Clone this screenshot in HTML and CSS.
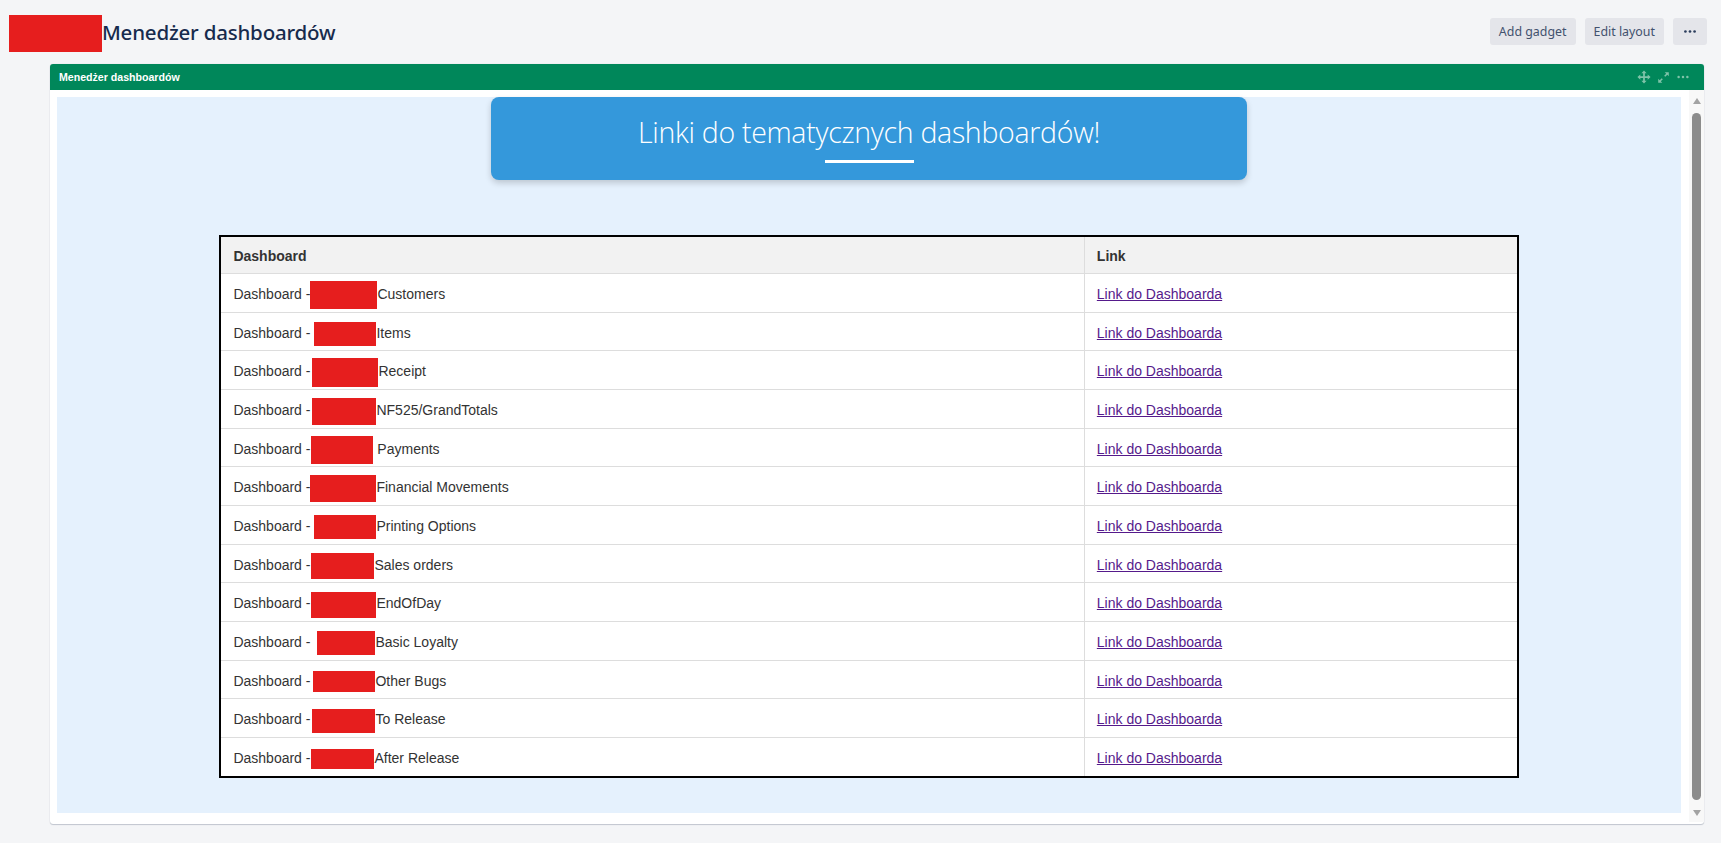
FILE: index.html
```html
<!DOCTYPE html>
<html lang="pl">
<head>
<meta charset="utf-8">
<title>Menedżer dashboardów</title>
<link rel="stylesheet" href="styles.css">
</head>
<body>
<header class="page-header">
  <div class="title-wrap">
    <span class="logo-redact"></span>
    <h1 class="page-title">Menedżer dashboardów</h1>
  </div>
  <div class="actions">
    <button class="btn">Add gadget</button>
    <button class="btn">Edit layout</button>
    <button class="btn btn-more"><svg viewBox="0 0 16 6" width="14" height="5"><circle cx="2.5" cy="3" r="1.6" fill="currentColor"/><circle cx="8" cy="3" r="1.6" fill="currentColor"/><circle cx="13.5" cy="3" r="1.6" fill="currentColor"/></svg></button>
  </div>
</header>

<section class="gadget">
  <div class="gadget-head">
    <span class="gadget-title">Menedżer dashboardów</span>
    <div class="gadget-tools">
      <svg class="tool" viewBox="0 0 16 16" width="14" height="14"><path d="M8 0.5 L11 3.8 H9 V7 H12.2 V5 L15.5 8 L12.2 11 V9 H9 V12.2 H11 L8 15.5 L5 12.2 H7 V9 H3.8 V11 L0.5 8 L3.8 5 V7 H7 V3.8 H5 Z" fill="currentColor"/></svg>
      <svg class="tool" viewBox="0 0 16 16" width="13" height="13"><path d="M9.5 1.5 H14.5 V6.5 L12.7 4.7 L10.2 7.2 L8.8 5.8 L11.3 3.3 Z M6.5 14.5 H1.5 V9.5 L3.3 11.3 L5.8 8.8 L7.2 10.2 L4.7 12.7 Z" fill="currentColor"/></svg>
      <svg class="tool" viewBox="0 0 16 16" width="14" height="14"><circle cx="3" cy="8" r="1.4" fill="currentColor"/><circle cx="8" cy="8" r="1.4" fill="currentColor"/><circle cx="13" cy="8" r="1.4" fill="currentColor"/></svg>
    </div>
  </div>
  <div class="gadget-body">
    <div class="frame">
      <div class="canvas">
        <div class="banner">
          <h2 class="banner-title">Linki do tematycznych dashboardów!</h2>
          <span class="banner-rule"></span>
        </div>
        <table class="dash-table">
          <thead>
            <tr><th class="col-name">Dashboard</th><th class="col-link">Link</th></tr>
          </thead>
          <tbody>
            <tr><td>Dashboard -<span class="redact" style="margin-left:0px;width:67px;height:28px;margin-top:-6px;margin-bottom:-6px"></span>Customers</td><td><a href="#">Link do Dashboarda</a></td></tr>
            <tr><td>Dashboard -<span class="redact" style="margin-left:4px;width:62px;height:24px;margin-top:-4px;margin-bottom:-4px"></span>Items</td><td><a href="#">Link do Dashboarda</a></td></tr>
            <tr><td>Dashboard -<span class="redact" style="margin-left:2px;width:66px;height:29px;margin-top:-6px;margin-bottom:-6px"></span>Receipt</td><td><a href="#">Link do Dashboarda</a></td></tr>
            <tr><td>Dashboard -<span class="redact" style="margin-left:2px;width:64px;height:27px;margin-top:-5px;margin-bottom:-5px"></span>NF525/GrandTotals</td><td><a href="#">Link do Dashboarda</a></td></tr>
            <tr><td>Dashboard -<span class="redact" style="margin-left:1px;width:62px;height:28px;margin-top:-6px;margin-bottom:-6px"></span> Payments</td><td><a href="#">Link do Dashboarda</a></td></tr>
            <tr><td>Dashboard -<span class="redact" style="margin-left:0px;width:66px;height:27px;margin-top:-5px;margin-bottom:-5px"></span>Financial Movements</td><td><a href="#">Link do Dashboarda</a></td></tr>
            <tr><td>Dashboard -<span class="redact" style="margin-left:4px;width:62px;height:24px;margin-top:-4px;margin-bottom:-4px"></span>Printing Options</td><td><a href="#">Link do Dashboarda</a></td></tr>
            <tr><td>Dashboard -<span class="redact" style="margin-left:1px;width:63px;height:26px;margin-top:-5px;margin-bottom:-5px"></span>Sales orders</td><td><a href="#">Link do Dashboarda</a></td></tr>
            <tr><td>Dashboard -<span class="redact" style="margin-left:1px;width:65px;height:26px;margin-top:-5px;margin-bottom:-5px"></span>EndOfDay</td><td><a href="#">Link do Dashboarda</a></td></tr>
            <tr><td>Dashboard -<span class="redact" style="margin-left:7px;width:58px;height:24px;margin-top:-4px;margin-bottom:-4px"></span>Basic Loyalty</td><td><a href="#">Link do Dashboarda</a></td></tr>
            <tr><td>Dashboard -<span class="redact" style="margin-left:3px;width:62px;height:21px;margin-top:-2px;margin-bottom:-2px"></span>Other Bugs</td><td><a href="#">Link do Dashboarda</a></td></tr>
            <tr><td>Dashboard -<span class="redact" style="margin-left:2px;width:63px;height:24px;margin-top:-4px;margin-bottom:-4px"></span>To Release</td><td><a href="#">Link do Dashboarda</a></td></tr>
            <tr><td>Dashboard -<span class="redact" style="margin-left:1px;width:63px;height:20px;margin-top:-2px;margin-bottom:-2px"></span>After Release</td><td><a href="#">Link do Dashboarda</a></td></tr>
          </tbody>
        </table>
      </div>
    </div>
    <div class="scrollbar">
      <span class="arrow arrow-up"></span>
      <span class="thumb"></span>
      <span class="arrow arrow-down"></span>
    </div>
  </div>
</section>
</body>
</html>
```

FILE: styles.css
```css
* { box-sizing: border-box; }

html, body {
  margin: 0;
  padding: 0;
}

body {
  background: #f4f5f7;
  font-family: "Noto Sans", "Liberation Sans", Arial, sans-serif;
  color: #172b4d;
  width: 1721px;
  height: 843px;
  overflow: hidden;
}

.page-header {
  display: flex;
  justify-content: space-between;
  align-items: flex-start;
  padding: 15px 14px 0 9px;
  height: 52px;
}

.title-wrap {
  display: flex;
  align-items: center;
  height: 37px;
}

.logo-redact {
  display: block;
  width: 93px;
  height: 37px;
  background: #e61e1e;
}

.page-title {
  margin: 0;
  font-size: 20.5px;
  font-weight: 500;
  color: #172b4d;
  letter-spacing: -0.2px;
  line-height: 30px;
  padding-bottom: 3px;
}

.actions {
  display: flex;
  gap: 9px;
  margin-top: 3px;
}

.btn {
  height: 27px;
  border: none;
  border-radius: 3px;
  background: #e4e5ea;
  color: #42526e;
  font-family: "Noto Sans", "Liberation Sans", Arial, sans-serif;
  font-size: 12.4px;
  padding: 0 9px;
  line-height: 27px;
}

.btn-more {
  width: 34px;
  padding: 0;
  display: flex;
  align-items: center;
  justify-content: center;
  color: #2c3e5d;
}

.gadget {
  margin: 12px 17px 0 50px;
  background: #fff;
  border-radius: 3px;
  box-shadow: 0 1px 1px rgba(9, 30, 66, 0.2), 0 0 1px rgba(9, 30, 66, 0.2);
}

.gadget-head {
  height: 26px;
  background: #00875a;
  border-radius: 3px 3px 0 0;
  display: flex;
  align-items: center;
  justify-content: space-between;
  padding: 0 14px 0 9px;
}

.gadget-title {
  color: #fff;
  font-family: "Liberation Sans", Arial, sans-serif;
  font-weight: 700;
  font-size: 10.6px;
}

.gadget-tools {
  display: flex;
  align-items: center;
  gap: 6px;
  color: #7fc3a9;
}

.tool { display: block; }

.gadget-body {
  display: flex;
  height: 734px;
  padding-bottom: 2px;
}

.frame {
  flex: 1;
  padding: 7px 8px 9px 7px;
}

.canvas {
  height: 100%;
  background: #e5f1fd;
  display: flex;
  flex-direction: column;
  align-items: center;
}

.banner {
  width: 756px;
  height: 83px;
  background: #3498db;
  border-radius: 8px;
  box-shadow: 0 3px 6px rgba(0, 0, 0, 0.18);
  display: flex;
  flex-direction: column;
  align-items: center;
  padding-top: 16px;
}

.banner-title {
  margin: 0;
  color: #fff;
  font-family: "Open Sans", "Noto Sans", sans-serif;
  font-weight: 300;
  font-size: 28.5px;
  line-height: 38px;
  letter-spacing: -0.3px;
}

.banner-rule {
  display: block;
  width: 89px;
  height: 3px;
  background: #fff;
  margin-top: 9px;
}

.dash-table {
  margin-top: 55px;
  width: 80%;
  border-collapse: collapse;
  border: 2px solid #000;
  background: #fff;
  font-family: "Liberation Sans", Arial, sans-serif;
  font-size: 14px;
  color: #333;
}

.dash-table th {
  text-align: left;
  background: #f2f2f2;
  font-weight: 700;
  padding: 10px 12px 8px;
  line-height: 18px;
  border-bottom: 1px solid #ddd;
}

.dash-table td {
  padding: 12px 12px 8px;
  line-height: 17.6px;
  border-bottom: 1px solid #ddd;
  white-space: nowrap;
}

.dash-table th + th,
.dash-table td + td {
  border-left: 1px solid #ddd;
}

.col-name { width: 66.6%; }
.col-link { width: 33.4%; }

.dash-table a {
  color: #551a8b;
  text-decoration: underline;
}

.redact {
  display: inline-block;
  vertical-align: middle;
  background: #e61e1e;
}

.scrollbar {
  width: 15px;
  background: #f8f8f8;
  display: flex;
  flex-direction: column;
  align-items: center;
  padding: 8px 0 6px;
}

.arrow {
  width: 0;
  height: 0;
  border-left: 4.5px solid transparent;
  border-right: 4.5px solid transparent;
}

.arrow-up { border-bottom: 6px solid #a3a3a3; }
.arrow-down { border-top: 6px solid #a3a3a3; }

.thumb {
  width: 9px;
  flex: 1;
  margin: 9px 0 10px;
  background: #8c8c8c;
  border-radius: 5px;
}
```
